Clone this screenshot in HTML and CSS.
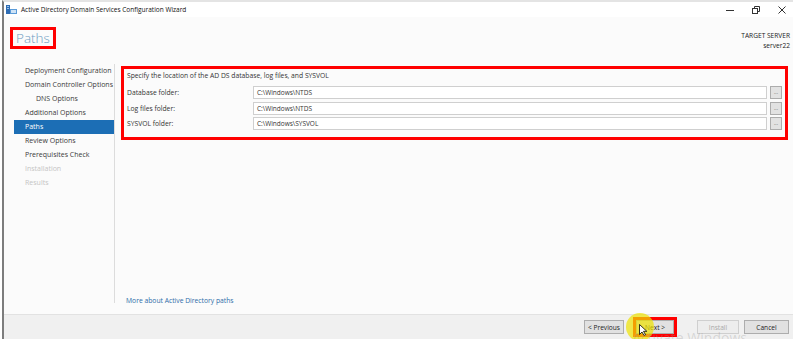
FILE: index.html
```html
<!DOCTYPE html>
<html lang="en">
<head>
  <meta charset="UTF-8" />
  <title>Active Directory Domain Services Configuration Wizard</title>
  <link rel="stylesheet" href="styles.css">
</head>
<body>
  <div class="window">

    <!-- title bar -->
    <div class="titlebar">
      <svg class="app-icon" width="11" height="10" viewBox="0 0 11 10">
        <rect x="0" y="0" width="4" height="9" fill="#2f6db5"/>
        <rect x="1" y="1" width="2" height="1" fill="#9cc3ea"/>
        <rect x="1" y="3" width="2" height="1" fill="#9cc3ea"/>
        <rect x="4" y="4" width="7" height="5" fill="#5b9bd8"/>
        <rect x="5" y="5" width="5" height="3" fill="#cfe3f6"/>
      </svg>
      <span class="title">Active Directory Domain Services Configuration Wizard</span>
      <div class="controls">
        <svg width="10" height="10" viewBox="0 0 10 10"><line x1="1" y1="5.5" x2="9" y2="5.5" stroke="#333" stroke-width="1"/></svg>
        <svg width="10" height="10" viewBox="0 0 10 10"><rect x="1.5" y="3.5" width="5" height="5" fill="none" stroke="#333"/><path d="M3.5 3.5V1.5h5v5h-2" fill="none" stroke="#333"/></svg>
        <svg width="10" height="10" viewBox="0 0 10 10"><path d="M1.5 1.5l7 7M8.5 1.5l-7 7" stroke="#333" stroke-width="1"/></svg>
      </div>
    </div>

    <!-- header -->
    <div class="header">
      <h1 class="page-title marked">Paths</h1>
      <div class="target">
        <div>TARGET SERVER</div>
        <div>server22</div>
      </div>
    </div>

    <!-- body -->
    <div class="main">
      <ul class="steps">
        <li>Deployment Configuration</li>
        <li>Domain Controller Options</li>
        <li class="sub">DNS Options</li>
        <li>Additional Options</li>
        <li class="current">Paths</li>
        <li>Review Options</li>
        <li>Prerequisites Check</li>
        <li class="disabled">Installation</li>
        <li class="disabled">Results</li>
      </ul>

      <div class="content">
        <div class="paths marked">
          <p class="intro">Specify the location of the AD DS database, log files, and SYSVOL</p>
          <div class="row">
            <label>Database folder:</label>
            <div class="field">C:\Windows\NTDS</div>
            <button class="browse">...</button>
          </div>
          <div class="row">
            <label>Log files folder:</label>
            <div class="field">C:\Windows\NTDS</div>
            <button class="browse">...</button>
          </div>
          <div class="row">
            <label>SYSVOL folder:</label>
            <div class="field">C:\Windows\SYSVOL</div>
            <button class="browse">...</button>
          </div>
        </div>
        <a class="more" href="#">More about Active Directory paths</a>
      </div>
    </div>

    <!-- footer -->
    <div class="footer">
      <button class="btn">&lt; Previous</button>
      <span class="marked next-mark"><button class="btn">Next &gt;</button></span>
      <button class="btn install" disabled>Install</button>
      <button class="btn cancel">Cancel</button>
    </div>

    <div class="cursor-glow"></div>
    <svg class="cursor" width="8" height="12" viewBox="0 0 8 12"><path d="M0.5 0.5v10l2.5-2.5 2 3.5 1.5-0.8-2-3.4h3.3z" fill="#fff" stroke="#000" stroke-width="0.8"/></svg>
    <div class="watermark">Activate Windows</div>
  </div>
</body>
</html>
```

FILE: styles.css
```css
* {
  box-sizing: border-box;
}
html, body {
  margin: 0;
  padding: 0;
  width: 100%;
  height: 100%;
  background: #ffffff;
  font-family: 'Open Sans', 'Noto Sans', sans-serif;
  color: #333;
  overflow: hidden;
}
.window {
  position: relative;
  margin-left: 2px;
  height: 339px;
  border-left: 2px solid #7d7d7d;
  border-top: 2px solid #e4e4e4;
  background: #fbfbfb;
  display: flex;
  flex-direction: column;
}
.marked {
  outline: 3px solid #ff0000;
}

/* title bar */
.titlebar {
  height: 15px;
  display: flex;
  align-items: center;
  background: #fff;
  padding-left: 2px;
}
.app-icon {
  margin-right: 4px;
}
.title {
  font-size: 6.5px;
  color: #111;
}
.controls {
  margin-left: auto;
  display: flex;
  gap: 16px;
  padding-right: 6px;
}

/* header */
.header {
  height: 44px;
  display: flex;
  justify-content: space-between;
  align-items: flex-start;
  padding: 13px 3px 0 9px;
}
.page-title {
  margin: 0;
  font-size: 13.5px;
  font-weight: 300;
  line-height: 16px;
  color: #6e9cc2;
  padding: 0 3px;
}
.target {
  text-align: right;
  font-size: 6.6px;
  line-height: 10px;
  color: #222;
  padding-top: 1px;
}

/* main */
.main {
  flex: 1;
  display: flex;
  padding-top: 3px;
}
.steps {
  list-style: none;
  margin: 0;
  padding: 0 0 0 10px;
  width: 111px;
  border-right: 1px solid #dcdcdc;
  margin-bottom: 11px;
}
.steps li {
  height: 14px;
  line-height: 14px;
  font-size: 7px;
  padding-left: 11px;
  color: #3a3a3a;
}
.steps li.sub {
  padding-left: 22px;
}
.steps li.current {
  background: #1c6eb5;
  color: #fff;
}
.steps li.disabled {
  color: #c4c4c4;
}
.content {
  flex: 1;
  display: flex;
  flex-direction: column;
  padding: 5px 8px 0 8px;
}
.paths {
  padding: 1px 3px 5px 3px;
  margin-left: 1px;
}
.intro {
  margin: 0 0 3px 0;
  font-size: 6.75px;
  line-height: 12px;
}
.row {
  display: flex;
  align-items: center;
  height: 15.5px;
}
.row label {
  width: 126px;
  font-size: 6.75px;
}
.field {
  flex: 1;
  height: 13px;
  line-height: 11px;
  border: 1px solid #cfcfcf;
  background: #fff;
  font-size: 6.5px;
  padding-left: 3px;
}
.browse {
  width: 12px;
  height: 13px;
  margin-left: 3px;
  padding: 0;
  border: 1px solid #acacac;
  background: #e2e2e2;
  font-size: 5px;
  line-height: 9px;
  color: #555;
  font-family: inherit;
}
.more {
  margin-top: auto;
  margin-bottom: 9px;
  margin-left: 3px;
  font-size: 6.75px;
  color: #2d6ca8;
  text-decoration: none;
}

/* footer */
.footer {
  height: 25px;
  border-top: 1px solid #e2e2e2;
  background: #f0f0f0;
  display: flex;
  align-items: center;
  justify-content: flex-end;
}
.btn {
  width: 40px;
  height: 14px;
  padding: 0;
  border: 1px solid #adadad;
  background: #e1e1e1;
  font-family: inherit;
  font-size: 6.6px;
  color: #222;
}
.next-mark {
  display: flex;
  margin-left: 12px;
  margin-right: 23px;
}
.next-mark .btn {
  width: 38px;
}
.btn.install {
  width: 42px;
  color: #a8a8a8;
  border-color: #cfcfcf;
  background: #ededed;
}
.btn.cancel {
  width: 45px;
  margin-left: 5px;
  margin-right: 4px;
}

/* overlays */
.cursor-glow {
  position: absolute;
  left: 622px;
  top: 311px;
  width: 28px;
  height: 28px;
  border-radius: 50%;
  background: rgba(238, 226, 0, 0.7);
}
.cursor {
  position: absolute;
  left: 635px;
  top: 322px;
}
.watermark {
  position: absolute;
  left: 628px;
  top: 326px;
  font-size: 14px;
  color: rgba(150, 150, 150, 0.3);
}
```
